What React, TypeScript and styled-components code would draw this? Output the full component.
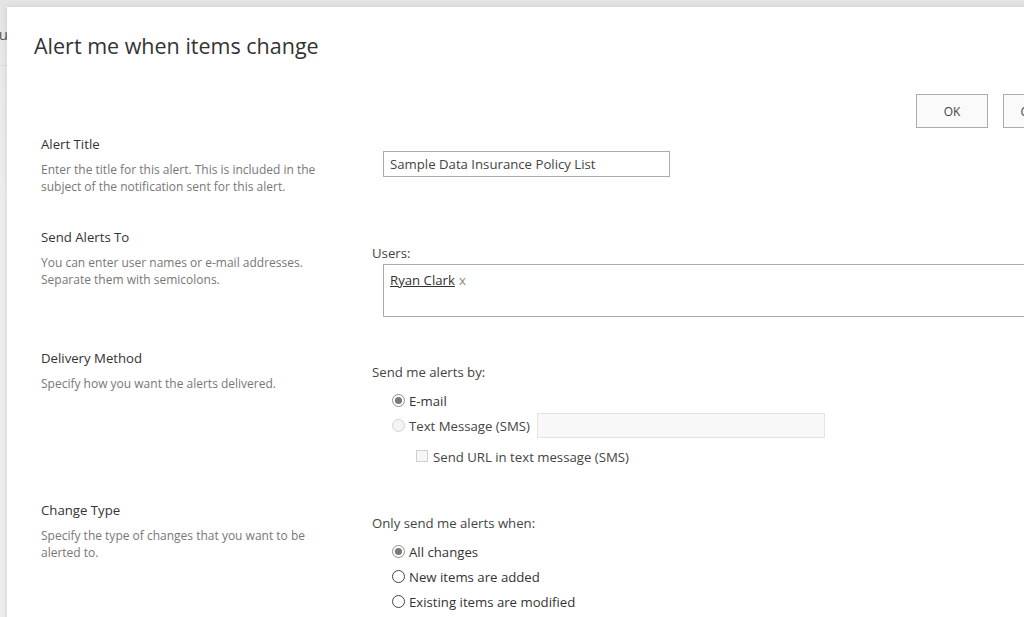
import React from "react";
import styled, { createGlobalStyle } from "styled-components";

const Global = createGlobalStyle`
  html, body { margin: 0; padding: 0; width: 1024px; height: 617px; overflow: hidden; background: #ebebeb; }
  body { font-family: "Segoe UI", "Open Sans", sans-serif; color: #333; }
  * { box-sizing: border-box; }
`;

const Page = styled.div`
  position: relative;
  width: 1024px;
  height: 617px;
  overflow: hidden;
  background: linear-gradient(#e4e4e4 0px, #e9e9e9 60px, #eeeeee 200px);
`;

const BackNav = styled.div`
  width: 8px;
  overflow: hidden;
  display: flex;
  justify-content: flex-end;
  padding-top: 24px;
  white-space: nowrap;
  font-size: 15px;
  color: #555;
  border-bottom: 1px solid #dedede;
  height: 66px;
`;

const Dialog = styled.div`
  position: absolute;
  left: 7px;
  top: 7px;
  width: 1095px;
  height: 700px;
  background: #fff;
  box-shadow: 0 0 6px rgba(0, 0, 0, 0.12);
  padding: 0 27px 0 0;
`;

const Title = styled.h1`
  margin: 0;
  padding: 25px 0 0 27px;
  font-size: 21.5px;
  line-height: 28px;
  font-weight: 400;
  color: #333;
`;

const ButtonBar = styled.div`
  display: flex;
  justify-content: flex-end;
  gap: 15px;
  margin-top: 34px;
`;

const Button = styled.button`
  width: 72px;
  height: 34px;
  border: 1px solid #ababab;
  background: #fafafa;
  color: #444;
  font-family: inherit;
  font-size: 12px;
  padding: 0;
`;

const Form = styled.div`
  display: flex;
  flex-direction: column;
  padding-left: 34px;
`;

const Section = styled.div<{ $pt: number }>`
  display: grid;
  grid-template-columns: 331px 1fr;
  padding-top: ${(p) => p.$pt}px;
`;

const LeftCol = styled.div`
  display: flex;
  flex-direction: column;
`;

const Label = styled.div`
  font-size: 13.2px;
  line-height: 18px;
  color: #333;
`;

const Desc = styled.div`
  margin-top: 8px;
  font-size: 12px;
  line-height: 17px;
  color: #777;
  width: 300px;
`;

const RightCol = styled.div<{ $pt: number }>`
  padding-top: ${(p) => p.$pt}px;
  display: flex;
  flex-direction: column;
`;

const FieldLabel = styled.div`
  font-size: 13.2px;
  line-height: 18px;
  color: #444;
`;

const TextBox = styled.div`
  margin-left: 11px;
  width: 287px;
  height: 26px;
  border: 1px solid #ababab;
  padding: 0 6px;
  font-size: 13.2px;
  line-height: 24px;
  color: #444;
`;

const PeopleBox = styled.div`
  margin-left: 11px;
  margin-top: 2px;
  width: 700px;
  height: 53px;
  border: 1px solid #ababab;
  padding: 5px 6px;
  font-size: 13.2px;
  line-height: 20px;
  color: #444;
`;

const Person = styled.span`
  color: #333;
  text-decoration: underline;
`;

const Remove = styled.span`
  color: #888;
  margin-left: 4px;
`;

const OptionList = styled.div`
  display: flex;
  flex-direction: column;
  margin-top: 7px;
`;

const Option = styled.div<{ $indent: number; $top?: number; $disabled?: boolean }>`
  display: flex;
  align-items: center;
  gap: 4px;
  height: 25px;
  margin-top: ${(p) => p.$top ?? 0}px;
  padding-left: ${(p) => p.$indent}px;
  font-size: 13.2px;
  color: ${(p) => (p.$disabled ? "#444" : "#333")};
`;

const SmsBox = styled.div`
  width: 288px;
  height: 25px;
  margin-left: 3px;
  border: 1px solid #e3e3e3;
  background: #f8f8f8;
`;

type RadioKind = "checked" | "unchecked" | "disabled";

const Radio = ({ kind }: { kind: RadioKind }) => (
  <svg width="13" height="13" viewBox="0 0 13 13">
    {kind === "checked" && (
      <>
        <circle cx="6.5" cy="6.5" r="6" fill="#fff" stroke="#8f8f8f" strokeWidth="1" />
        <circle cx="6.5" cy="6.5" r="3.6" fill="#7a7a7a" />
      </>
    )}
    {kind === "unchecked" && (
      <circle cx="6.5" cy="6.5" r="6" fill="#fff" stroke="#444" strokeWidth="1" />
    )}
    {kind === "disabled" && (
      <circle cx="6.5" cy="6.5" r="6" fill="#f4f4f4" stroke="#d2d2d2" strokeWidth="1" />
    )}
  </svg>
);

const Checkbox = () => (
  <svg width="13" height="13" viewBox="0 0 13 13">
    <rect x="0.5" y="0.5" width="11" height="11" fill="#f6f6f6" stroke="#cfcfcf" strokeWidth="1" />
  </svg>
);

export default function App() {
  return (
    <Page>
      <Global />
      <BackNav>Menu</BackNav>
      <Dialog>
        <Title>Alert me when items change</Title>
        <ButtonBar>
          <Button>OK</Button>
          <Button>Cancel</Button>
        </ButtonBar>
        <Form>
          <Section $pt={7}>
            <LeftCol>
              <Label>Alert Title</Label>
              <Desc>Enter the title for this alert. This is included in the subject of the notification sent for this alert.</Desc>
            </LeftCol>
            <RightCol $pt={16}>
              <TextBox>Sample Data Insurance Policy List</TextBox>
            </RightCol>
          </Section>
          <Section $pt={33}>
            <LeftCol>
              <Label>Send Alerts To</Label>
              <Desc>You can enter user names or e-mail addresses. Separate them with semicolons.</Desc>
            </LeftCol>
            <RightCol $pt={16}>
              <FieldLabel>Users:</FieldLabel>
              <PeopleBox>
                <Person>Ryan Clark</Person>
                <Remove>x</Remove>
              </PeopleBox>
            </RightCol>
          </Section>
          <Section $pt={32}>
            <LeftCol>
              <Label>Delivery Method</Label>
              <Desc>Specify how you want the alerts delivered.</Desc>
            </LeftCol>
            <RightCol $pt={14}>
              <FieldLabel>Send me alerts by:</FieldLabel>
              <OptionList>
                <Option $indent={20}>
                  <Radio kind="checked" />
                  E-mail
                </Option>
                <Option $indent={20} $disabled>
                  <Radio kind="disabled" />
                  Text Message (SMS)
                  <SmsBox />
                </Option>
                <Option $indent={44} $top={6} $disabled>
                  <Checkbox />
                  Send URL in text message (SMS)
                </Option>
              </OptionList>
            </RightCol>
          </Section>
          <Section $pt={32}>
            <LeftCol>
              <Label>Change Type</Label>
              <Desc>Specify the type of changes that you want to be alerted to.</Desc>
            </LeftCol>
            <RightCol $pt={13}>
              <FieldLabel>Only send me alerts when:</FieldLabel>
              <OptionList>
                <Option $indent={20}>
                  <Radio kind="checked" />
                  All changes
                </Option>
                <Option $indent={20}>
                  <Radio kind="unchecked" />
                  New items are added
                </Option>
                <Option $indent={20}>
                  <Radio kind="unchecked" />
                  Existing items are modified
                </Option>
              </OptionList>
            </RightCol>
          </Section>
        </Form>
      </Dialog>
    </Page>
  );
}
